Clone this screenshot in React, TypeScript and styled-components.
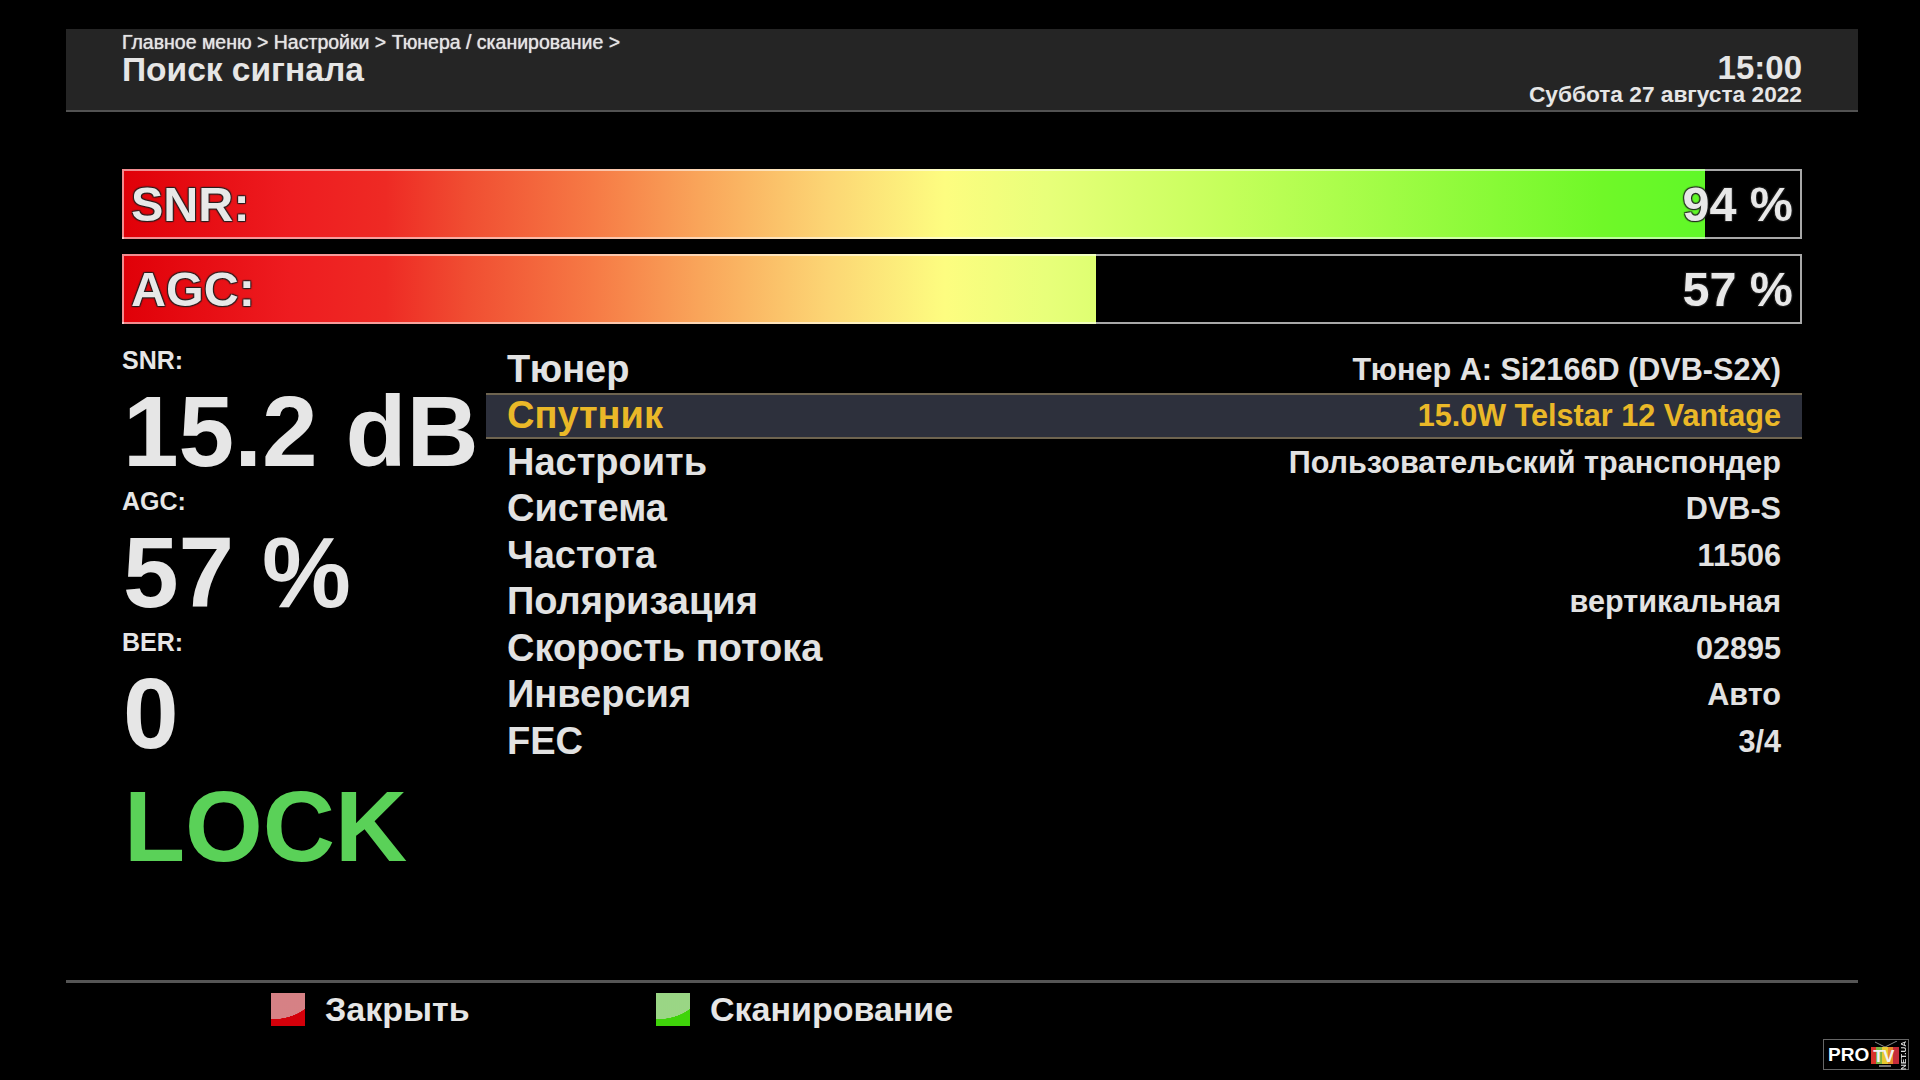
import styled, { createGlobalStyle } from "styled-components"

const GlobalStyle = createGlobalStyle`
  html, body {
    margin: 0;
    padding: 0;
    background: #000;
    overflow: hidden;
  }
  body {
    font-family: "Liberation Sans", Arial, sans-serif;
    font-weight: 700;
    color: #e6e6e6;
  }
`

const Screen = styled.div`
  width: 1920px;
  height: 1080px;
  box-sizing: border-box;
  padding: 29px 62px 0 66px;
  position: relative;
  overflow: hidden;
  display: flex;
  flex-direction: column;
`

const Header = styled.header`
  height: 83px;
  box-sizing: border-box;
  background: #252525;
  border-bottom: 2px solid #525252;
  padding: 3px 56px 0;
  display: flex;
  justify-content: space-between;
`

const Crumbs = styled.div`
  font-size: 19.5px;
  font-weight: 400;
  line-height: 21px;
  color: #e4e4e4;
  text-shadow: 0 0 1px #e4e4e4;
`

const Title = styled.div`
  font-size: 33.5px;
  line-height: 33px;
  color: #e6e6e6;
`

const Clock = styled.div`
  text-align: right;
  padding-top: 21px;
`

const Time = styled.div`
  font-size: 33px;
  line-height: 30px;
`

const DateLine = styled.div`
  font-size: 22.7px;
  line-height: 22px;
`

const Meters = styled.div`
  margin: 57px 56px 0;
  display: flex;
  flex-direction: column;
  gap: 15px;
`

const Meter = styled.div`
  position: relative;
  height: 70px;
  box-shadow: inset 0 0 0 2px #a8a8a8;
`

const MeterFill = styled.div`
  height: 100%;
  box-shadow: inset 2px 2px 0 rgba(255, 255, 255, 0.55), inset 0 -2px 0 rgba(255, 255, 255, 0.55);
  background: linear-gradient(
      90deg,
      #e00008 0%,
      #ee1c20 10%,
      #ee2a24 15.7%,
      #f04e32 20.6%,
      #f67a45 28%,
      #f9a55a 34.4%,
      #fcd574 42%,
      #fdfd80 49%,
      #e8ff7a 55%,
      #c4ff5a 66%,
      #70f828 88%,
      #60f828 94%,
      #60f828 100%
    )
    0 0 / 1680px 100% no-repeat;
`

const MeterText = styled.div`
  position: absolute;
  inset: 0;
  padding: 0 9px;
  display: flex;
  align-items: center;
  justify-content: space-between;
  font-size: 48.5px;
  color: #e8e8e8;
  text-shadow: -1px -1px 1px rgba(30, 30, 30, 0.85), 1px -1px 1px rgba(30, 30, 30, 0.85),
    -1px 1px 1px rgba(30, 30, 30, 0.85), 1px 1px 1px rgba(30, 30, 30, 0.85);
`

const Body = styled.div`
  margin: 22px 0 0 56px;
  display: grid;
  grid-template-columns: 364px 1316px;
`

const Readouts = styled.div`
  display: flex;
  flex-direction: column;
`

const ReadoutLabel = styled.div`
  font-size: 25px;
  line-height: 28px;
  margin-bottom: 2px;
`

const ReadoutValue = styled.div`
  font-size: 100px;
  line-height: 111px;
  margin-left: 1px;
  white-space: nowrap;
`

const LockText = styled.div`
  font-size: 100px;
  line-height: 110px;
  margin: 2px 0 0 2px;
  color: #5ad158;
`

const Rows = styled.div`
  display: flex;
  flex-direction: column;
`

const Row = styled.div<{ $active?: boolean }>`
  height: 46.5px;
  box-sizing: border-box;
  padding: 0 21px;
  display: flex;
  align-items: center;
  justify-content: space-between;
  color: ${(p) => (p.$active ? "#eab828" : "#e2e2e2")};
  background: ${(p) => (p.$active ? "#2d303c" : "transparent")};
  border-top: ${(p) => (p.$active ? "2px solid #6e6450" : "0")};
  border-bottom: ${(p) => (p.$active ? "2px solid #6e6450" : "0")};
`

const RowName = styled.span`
  font-size: 38px;
`

const RowValue = styled.span`
  font-size: 30.6px;
`

const Footer = styled.footer`
  position: absolute;
  left: 66px;
  right: 62px;
  top: 980px;
  height: 60px;
  border-top: 3px solid #555;
  display: flex;
  padding-left: 205px;
`

const Hint = styled.div<{ $width: number }>`
  width: ${(p) => p.$width}px;
  display: flex;
  align-items: center;
  gap: 20px;
  font-size: 34px;
  height: 52px;
`

const Swatch = styled.div<{ $tone: string }>`
  width: 34px;
  height: 33px;
  filter: blur(0.7px);
  background: radial-gradient(ellipse 125% 80% at 0 0, rgba(215, 215, 215, 0.6) 99%, transparent 100%),
    ${(p) => p.$tone};
`

const Logo = styled.div`
  position: absolute;
  left: 1823px;
  top: 1039px;
  width: 86px;
  height: 31px;
  box-sizing: border-box;
  border: 1px solid #666;
  display: flex;
  align-items: center;
  padding-left: 4px;
  background: #000;
`

const LogoPro = styled.span`
  font-size: 19px;
  line-height: 1;
  color: #fff;
`

const LogoNet = styled.span`
  position: absolute;
  right: 0;
  top: 1px;
  writing-mode: vertical-rl;
  transform: rotate(180deg);
  font-size: 8px;
  line-height: 9px;
  color: #ddd;
`

const TvBox = styled.div`
  position: relative;
  width: 30px;
  height: 27px;
  margin-left: 1px;
`

const TvLabel = styled.span`
  position: absolute;
  left: 3px;
  top: 7px;
  font-size: 17px;
  line-height: 1;
  color: #f2f2f2;
  letter-spacing: -0.5px;
`

const rows = [
  ["Тюнер", "Тюнер А: Si2166D (DVB-S2X)"],
  ["Спутник", "15.0W Telstar 12 Vantage"],
  ["Настроить", "Пользовательский транспондер"],
  ["Система", "DVB-S"],
  ["Частота", "11506"],
  ["Поляризация", "вертикальная"],
  ["Скорость потока", "02895"],
  ["Инверсия", "Авто"],
  ["FEC", "3/4"],
]

const meters = [
  { label: "SNR:", value: 94, fill: 94.2 },
  { label: "AGC:", value: 57, fill: 58 },
]

function LogoTv() {
  return (
    <TvBox>
      <svg width="30" height="27" viewBox="0 0 30 27">
        <path d="M5 1l10 5M27 0l-12 6" stroke="#888" strokeWidth="1" fill="none" />
        <rect x="1" y="6" width="5" height="17" fill="#d8332a" />
        <rect x="6" y="6" width="6" height="17" fill="#7db544" />
        <rect x="12" y="6" width="6" height="17" fill="#e8c92f" />
        <rect x="18" y="6" width="5" height="17" fill="#e98a2c" />
        <rect x="23" y="6" width="6" height="17" fill="#c62c3a" />
        <path d="M9 24h12v2H9z" fill="#777" />
      </svg>
      <TvLabel>TV</TvLabel>
    </TvBox>
  )
}

export default function App() {
  return (
    <Screen>
      <GlobalStyle />
      <Header>
        <div>
          <Crumbs>Главное меню &gt; Настройки &gt; Тюнера / сканирование &gt;</Crumbs>
          <Title>Поиск сигнала</Title>
        </div>
        <Clock>
          <Time>15:00</Time>
          <DateLine>Суббота 27 августа 2022</DateLine>
        </Clock>
      </Header>

      <Meters>
        {meters.map((m) => (
          <Meter key={m.label}>
            <MeterFill style={{ width: `${m.fill}%` }} />
            <MeterText>
              <span>{m.label}</span>
              <span>{m.value} %</span>
            </MeterText>
          </Meter>
        ))}
      </Meters>

      <Body>
        <Readouts>
          <ReadoutLabel>SNR:</ReadoutLabel>
          <ReadoutValue>15.2 dB</ReadoutValue>
          <ReadoutLabel>AGC:</ReadoutLabel>
          <ReadoutValue>57 %</ReadoutValue>
          <ReadoutLabel>BER:</ReadoutLabel>
          <ReadoutValue>0</ReadoutValue>
          <LockText>LOCK</LockText>
        </Readouts>
        <Rows>
          {rows.map(([name, value], i) => (
            <Row key={name} $active={i === 1}>
              <RowName>{name}</RowName>
              <RowValue>{value}</RowValue>
            </Row>
          ))}
        </Rows>
      </Body>

      <Footer>
        <Hint $width={385}>
          <Swatch $tone="#d4000a" />
          Закрыть
        </Hint>
        <Hint $width={400}>
          <Swatch $tone="#3fd40a" />
          Сканирование
        </Hint>
      </Footer>

      <Logo>
        <LogoPro>PRO</LogoPro>
        <LogoTv />
        <LogoNet>NET.UA</LogoNet>
      </Logo>
    </Screen>
  )
}
